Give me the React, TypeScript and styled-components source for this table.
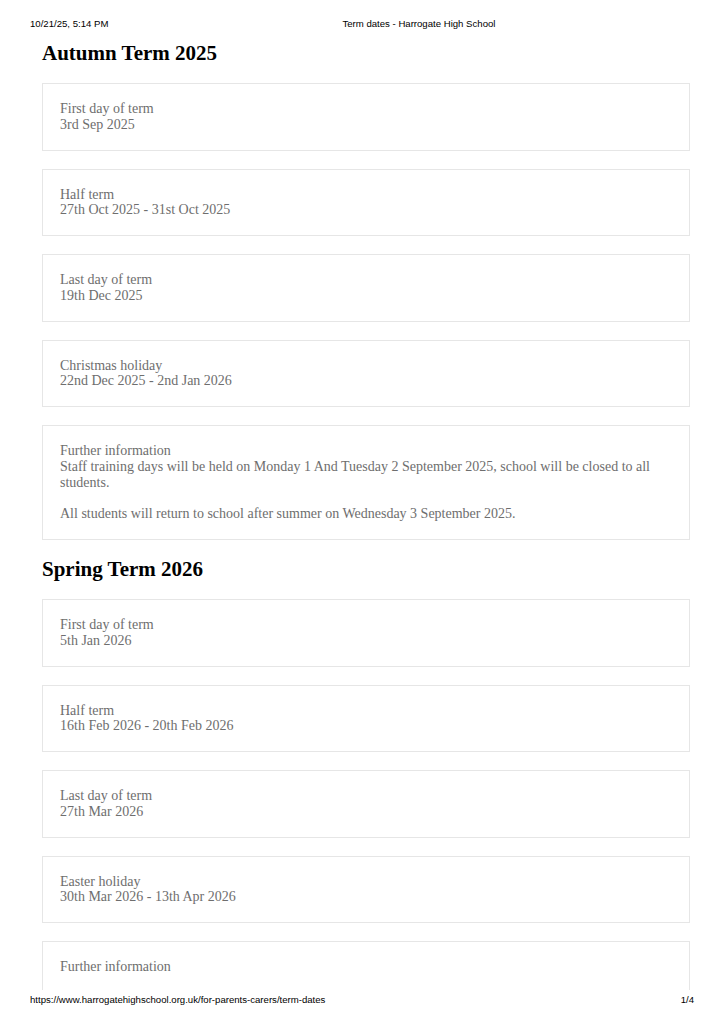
import styled, { createGlobalStyle } from 'styled-components'

const GlobalStyle = createGlobalStyle`
  html, body {
    margin: 0;
    padding: 0;
    background: #fff;
  }
  * {
    box-sizing: border-box;
  }
`

const Page = styled.div`
  width: 724px;
  height: 1024px;
  display: flex;
  flex-direction: column;
  overflow: hidden;
`

const PrintBar = styled.div<{ $top?: boolean }>`
  display: flex;
  align-items: flex-start;
  height: ${({ $top }) => ($top ? '30px' : '34px')};
  padding: ${({ $top }) => ($top ? '18px 30px 0' : '4px 30px 0')};
  font-family: 'Liberation Sans', Arial, sans-serif;
  font-size: 9.6px;
  line-height: 12px;
  color: #000;

  .title {
    margin-left: 234px;
  }
  .pages {
    margin-left: auto;
  }
`

const Content = styled.main`
  flex: 1;
  overflow: hidden;
  padding: 0 34px 0 42px;
  font-family: 'Liberation Serif', 'Times New Roman', serif;
`

const TermHeading = styled.h2`
  margin: 16px 0 17px;
  font-size: 21px;
  line-height: 26px;
  font-weight: 700;
  color: #000;

  &:first-child {
    margin-top: 10px;
  }
`

const CardList = styled.div`
  display: flex;
  flex-direction: column;
  gap: 18px;
`

const DateCard = styled.div`
  border: 1px solid #e6e6e6;
  padding: 17px;
  font-size: 14px;
  line-height: 15.75px;
  color: #6e6e6e;

  p {
    margin: 0;
  }
  p + p {
    margin-top: 16px;
  }
`

type Item = { label: string; lines: string[] }

const autumn: Item[] = [
  { label: 'First day of term', lines: ['3rd Sep 2025'] },
  { label: 'Half term', lines: ['27th Oct 2025 - 31st Oct 2025'] },
  { label: 'Last day of term', lines: ['19th Dec 2025'] },
  { label: 'Christmas holiday', lines: ['22nd Dec 2025 - 2nd Jan 2026'] },
  {
    label: 'Further information',
    lines: [
      'Staff training days will be held on Monday 1 And Tuesday 2 September 2025, school will be closed to all students.',
      'All students will return to school after summer on Wednesday 3 September 2025.',
    ],
  },
]

// the page break cuts the last card after its label
const spring: Item[] = [
  { label: 'First day of term', lines: ['5th Jan 2026'] },
  { label: 'Half term', lines: ['16th Feb 2026 - 20th Feb 2026'] },
  { label: 'Last day of term', lines: ['27th Mar 2026'] },
  { label: 'Easter holiday', lines: ['30th Mar 2026 - 13th Apr 2026'] },
  { label: 'Further information', lines: [] },
]

function Term({ title, items }: { title: string; items: Item[] }) {
  return (
    <>
      <TermHeading>{title}</TermHeading>
      <CardList>
        {items.map((item) => (
          <DateCard key={item.label}>
            <p>
              {item.label}
              {item.lines.length > 0 && (
                <>
                  <br />
                  {item.lines[0]}
                </>
              )}
            </p>
            {item.lines.slice(1).map((line) => (
              <p key={line}>{line}</p>
            ))}
            {item.lines.length === 0 && <p>&nbsp;</p>}
          </DateCard>
        ))}
      </CardList>
    </>
  )
}

export default function App() {
  return (
    <>
      <GlobalStyle />
      <Page>
        <PrintBar $top>
          <span>10/21/25, 5:14 PM</span>
          <span className='title'>Term dates - Harrogate High School</span>
        </PrintBar>
        <Content>
          <Term title='Autumn Term 2025' items={autumn} />
          <Term title='Spring Term 2026' items={spring} />
        </Content>
        <PrintBar>
          <span>https://www.harrogatehighschool.org.uk/for-parents-carers/term-dates</span>
          <span className='pages'>1/4</span>
        </PrintBar>
      </Page>
    </>
  )
}
